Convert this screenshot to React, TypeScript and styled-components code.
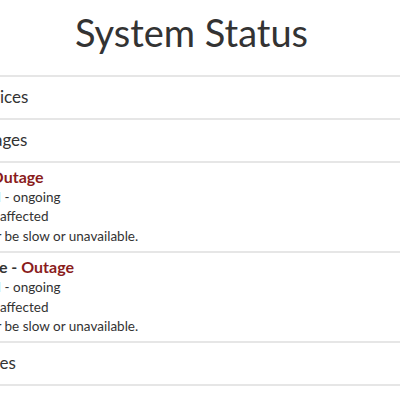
import React from "react";
import styled, { createGlobalStyle } from "styled-components";

const GlobalStyle = createGlobalStyle`
  html, body {
    margin: 0;
    padding: 0;
    background: #ffffff;
    overflow: hidden;
  }
  body {
    font-family: Lato, "Helvetica Neue", Arial, sans-serif;
    color: #333333;
    -webkit-font-smoothing: antialiased;
  }
`;

const Page = styled.main`
  margin: 0 -84px 0 -101px;
`;

const Title = styled.h1`
  margin: 0;
  padding: 9px 0 20px;
  font-size: 38px;
  line-height: 46px;
  font-weight: 400;
  text-align: center;
  color: #333333;
`;

const List = styled.ul`
  list-style: none;
  margin: 0;
  padding: 0;
  border-bottom: 2px solid #e6e6e6;
`;

const ServiceRow = styled.li`
  border-top: 2px solid #e6e6e6;
  padding: 8px 20px 9px;
  font-size: 17px;
  line-height: 24px;
  white-space: nowrap;
`;

const IncidentRow = styled.li`
  border-top: 2px solid #e6e6e6;
  padding: 4px 20px 5px;
  white-space: nowrap;
`;

const IncidentTitle = styled.div`
  font-size: 16px;
  font-weight: 700;
  line-height: 20px;
  color: #333333;
`;

const Status = styled.span<{ $tone: "outage" | "ok" }>`
  color: ${(p) => (p.$tone === "outage" ? "#8a1c1c" : "#2e7d32")};
`;

const Details = styled.div`
  margin-top: 1px;
  font-size: 13.5px;
  line-height: 19.4px;
  color: #333333;
`;

const DetailLine = styled.div``;

type Incident = {
  name: string;
  status: string;
  when: string;
  affected: string;
  note: string;
};

const incidents: Incident[] = [
  {
    name: "Find My",
    status: "Outage",
    when: "Tues 9:00 AM - ongoing",
    affected: "Several users affected",
    note: "It could either be slow or unavailable.",
  },
  {
    name: "iCloud Drive",
    status: "Outage",
    when: "Tues 9:00 AM - ongoing",
    affected: "Several users affected",
    note: "It could either be slow or unavailable.",
  },
];

export default function App() {
  return (
    <>
      <GlobalStyle />
      <Page>
        <Title>System Status</Title>
        <List>
          <ServiceRow>Apple Services</ServiceRow>
          <ServiceRow>Text Messages</ServiceRow>
          {incidents.map((i) => (
            <IncidentRow key={i.name}>
              <IncidentTitle>
                {i.name} - <Status $tone="outage">{i.status}</Status>
              </IncidentTitle>
              <Details>
                <DetailLine>{i.when}</DetailLine>
                <DetailLine>{i.affected}</DetailLine>
                <DetailLine>{i.note}</DetailLine>
              </Details>
            </IncidentRow>
          ))}
          <ServiceRow>iCloud Notes</ServiceRow>
        </List>
      </Page>
    </>
  );
}
